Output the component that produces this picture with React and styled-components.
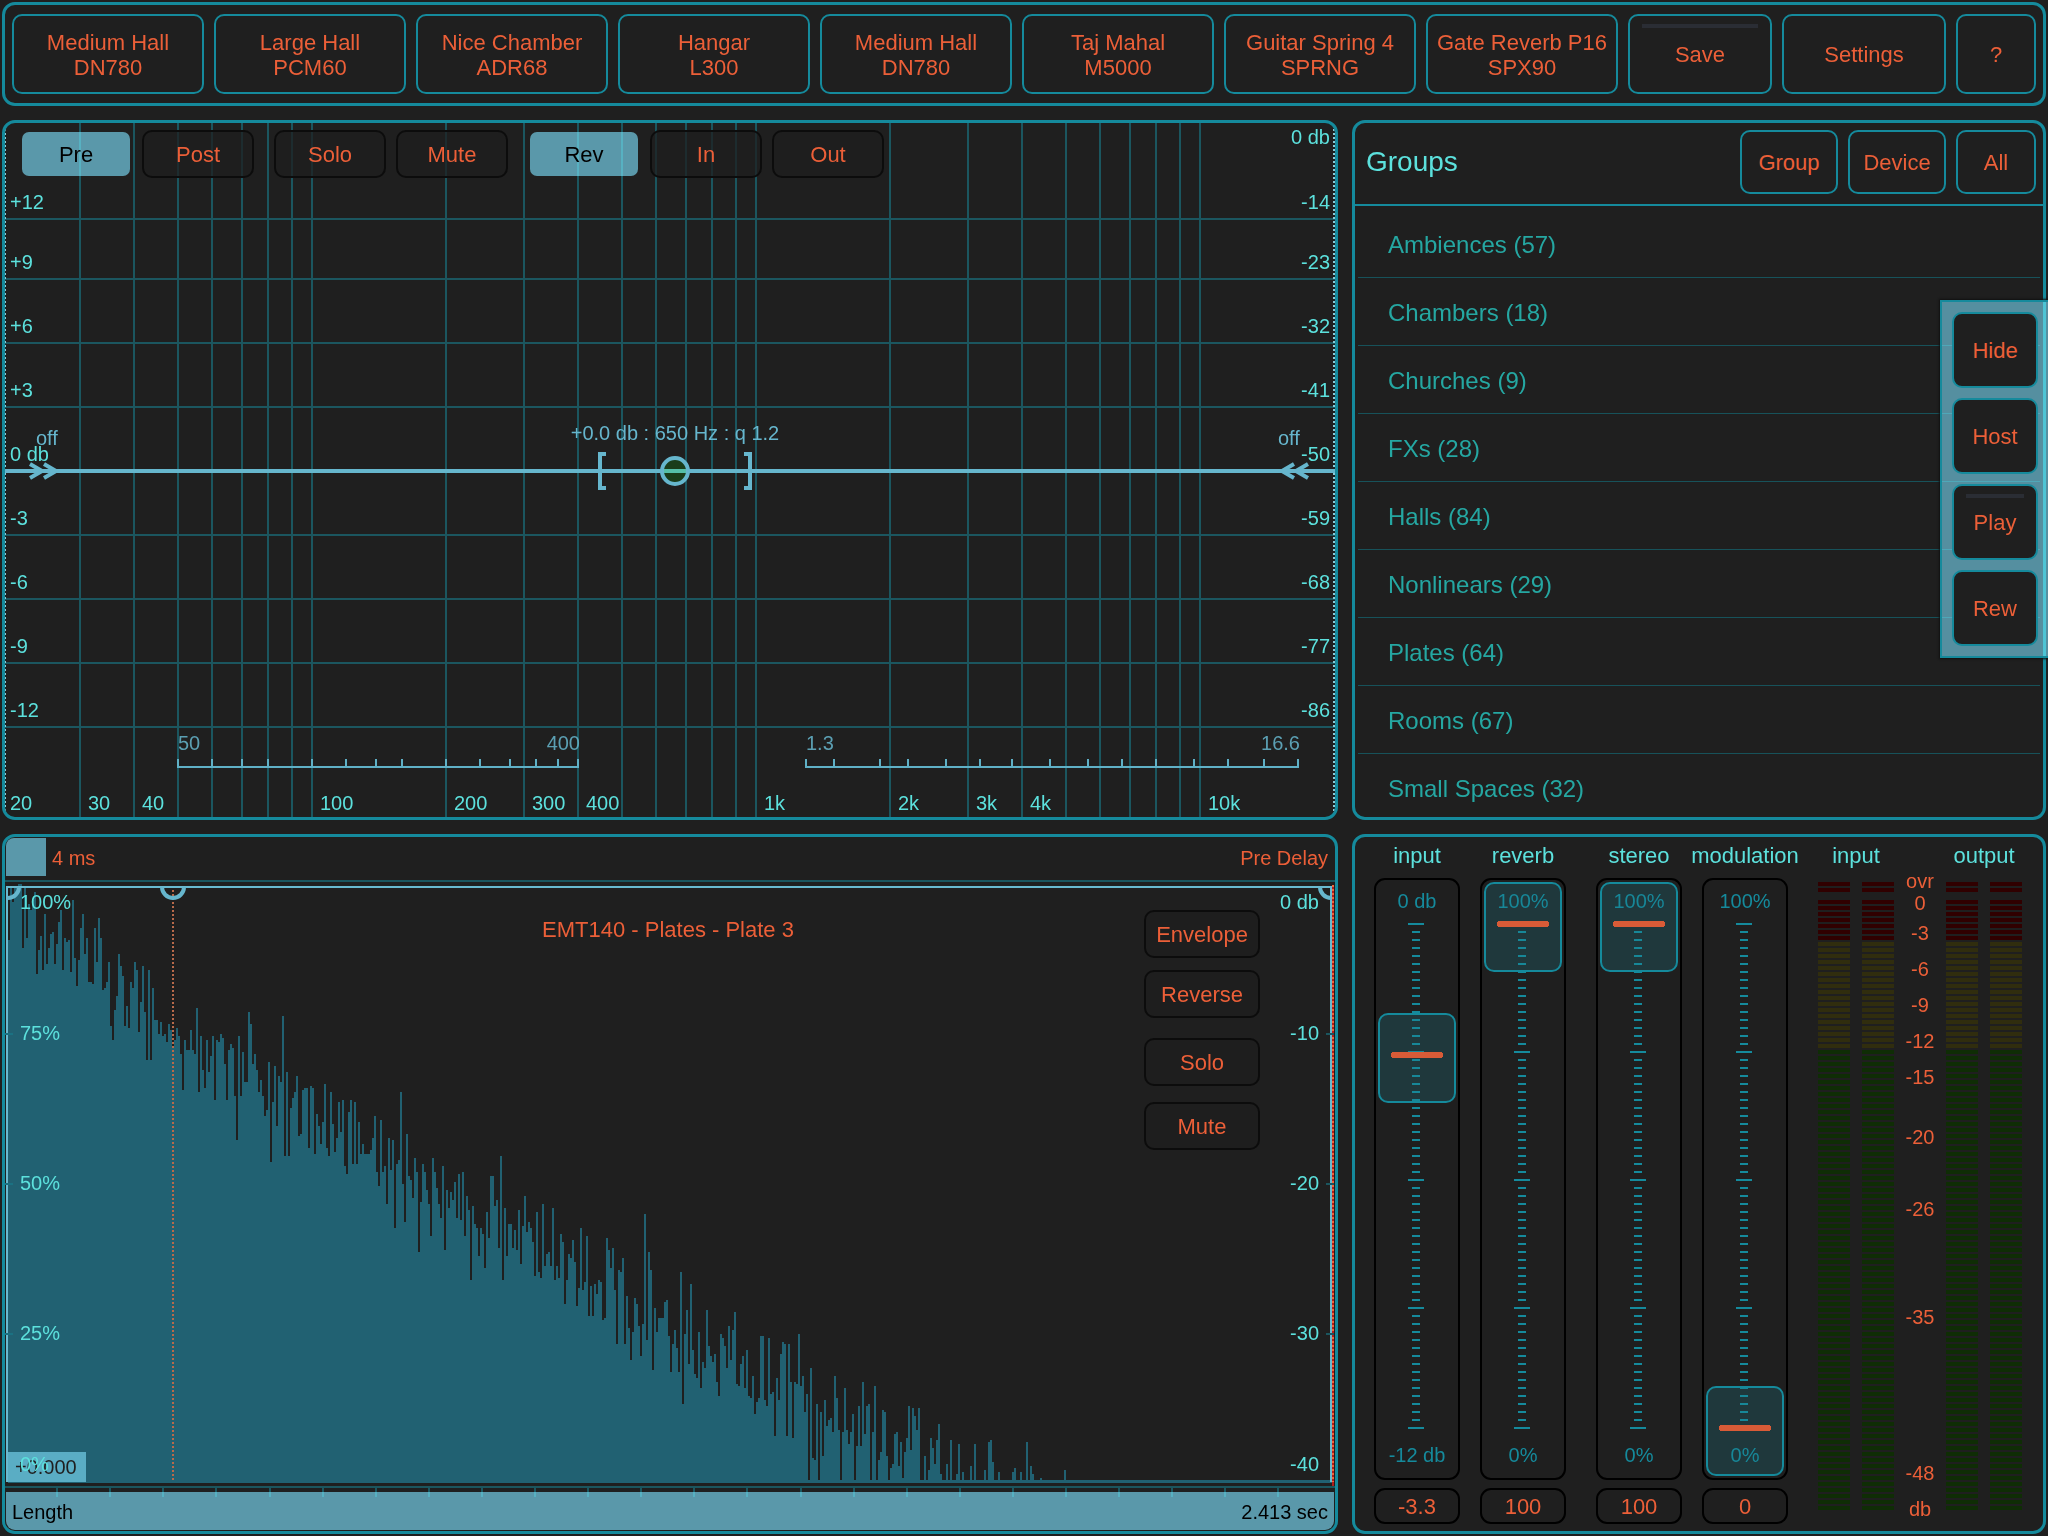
import React, { useState } from 'react';
import styled, { createGlobalStyle, css } from 'styled-components';

const BG = '#1f1f1f';
const TEAL = '#158a9c';
const GRID = '#1b565f';
const CYAN = '#5ce1dd';
const ORANGE = '#ec5f38';
const BLUE = '#66b6cd';
// screened over BG, so that the grid lines underneath stay visible
const FILL = '#438a9e';

const GlobalStyle = createGlobalStyle`
  * { box-sizing: border-box; }
  body {
    margin: 0;
    background: ${BG};
    color: ${CYAN};
    font-family: "Liberation Sans", Arial, sans-serif;
    font-size: 20px;
  }
  button, input { font: inherit; }
`;

/* ---------- layout ---------- */

const Page = styled.div`
  position: relative;
  display: grid;
  grid-template-rows: 104px minmax(0, 1fr) minmax(0, 1fr);
  gap: 14px;
  height: 100vh;
  min-height: 1200px;
  padding: 2px;
  overflow: hidden;
`;

const Columns = styled.div`
  display: grid;
  grid-template-columns: minmax(0, 668fr) minmax(0, 347fr);
  gap: 14px;
`;

const Panel = styled.section`
  border: 3px solid ${TEAL};
  border-radius: 13px;
  min-height: 0;
  overflow: hidden;
`;

const PresetBar = styled(Panel).attrs({ as: 'header' })`
  display: grid;
  grid-template-columns: repeat(8, 192fr) 144fr 164fr 80fr;
  gap: 10px;
  padding: 9px 7px;
`;

/* ---------- buttons ---------- */

const Button = styled.button`
  position: relative;
  padding: 0;
  border: 2px solid ${TEAL};
  border-radius: 10px;
  background: ${BG};
  color: ${ORANGE};
  font-size: 22px;
  line-height: 25px;
  white-space: pre-line;
  cursor: pointer;

  ${(p) => p.$progress && css`
    &::before {
      content: '';
      position: absolute;
      top: 8px;
      left: 12px;
      right: 12px;
      height: 4px;
      background: #2a2d34;
    }
  `}
`;

const PresetButton = styled(Button)`
  padding-top: 2px;
`;

const DarkButton = styled(Button)`
  width: ${(p) => (p.$wide ? 116 : 112)}px;
  height: 48px;
  border-color: #0c0c0c;
  background: rgba(31, 31, 31, 0.75);

  ${(p) => p.$active && css`
    border-color: transparent;
    background: none;
    color: #000;
    &::before {
      content: '';
      position: absolute;
      inset: 0;
      border-radius: 7px;
      background: ${FILL};
      mix-blend-mode: screen;
    }
  `}
`;

const Caption = styled.span`
  position: relative;
`;

/* ---------- equalizer ---------- */

const Stack = styled.div`
  display: grid;
  grid-template: minmax(0, 1fr) / minmax(0, 1fr);
  flex: 1;
  min-height: 0;
  height: 100%;
  & > * { grid-area: 1 / 1; }
`;

const Chart = styled.svg`
  display: block;
  width: 100%;
  height: 100%;
  text { font-size: 20px; fill: ${CYAN}; }
  line { shape-rendering: crispEdges; }
`;

const EqButtons = styled.div`
  display: flex;
  align-self: start;
  gap: 20px;
  padding: 7px 15px;
`;

const ButtonPair = styled.div`
  display: flex;
  gap: 10px;
`;

/* ---------- groups ---------- */

const GroupsHeader = styled.div`
  display: flex;
  align-items: center;
  gap: 10px;
  padding: 7px 7px 10px 11px;
  border-bottom: 2px solid ${TEAL};
`;

const GroupsTitle = styled.h1`
  flex: 1;
  margin: 0;
  font-size: 28px;
  font-weight: normal;
`;

const HeaderButton = styled(Button)`
  width: ${(p) => (p.$narrow ? 80 : 98)}px;
  height: 64px;
`;

const GroupList = styled.ul`
  list-style: none;
  margin: 0;
  padding: 4px 3px 0;
`;

const GroupRow = styled.li`
  display: flex;
  align-items: center;
  height: 68px;
  padding: 2px 0 0 30px;
  border-bottom: 1px solid #17525a;
  color: #25a7a2;
  font-size: 24px;
`;

const SideDock = styled.nav`
  position: absolute;
  top: 300px;
  right: 0;
  display: flex;
  flex-direction: column;
  gap: 10px;
  padding: 10px;
  border: 2px solid ${TEAL};
  border-right: none;
  box-shadow: 0 0 2px 1px #111;

  &::before {
    content: '';
    position: absolute;
    inset: 0;
    background: #3e7f93;
    mix-blend-mode: screen;
  }
`;

const DockButton = styled(Button)`
  width: 86px;
  height: 76px;
`;

/* ---------- impulse response ---------- */

const ImpulsePanel = styled(Panel)`
  display: flex;
  flex-direction: column;
`;

const BarRow = styled.label`
  display: grid;
  grid-template: minmax(0, 1fr) / minmax(0, 1fr);
  height: 45px;
  & > * { grid-area: 1 / 1; }
`;

const DelayRow = styled(BarRow)`
  padding: 1px;
  border-bottom: 2px solid ${GRID};
  color: ${ORANGE};
`;

const LengthRow = styled(BarRow)`
  border-top: 2px solid ${GRID};
  color: #000;
`;

const BarText = styled.span`
  position: relative;
  display: flex;
  justify-content: space-between;
  align-items: center;
  padding: ${(p) => p.$pad};
  pointer-events: none;
`;

const DelayRange = styled.input`
  appearance: none;
  width: 100%;
  height: 38px;
  margin: 0;
  background: none;
  &::-webkit-slider-thumb {
    appearance: none;
    width: 40px;
    height: 38px;
    border-radius: 8px 0 0 0;
    background: #5a98aa;
  }
`;

const LengthRange = styled.input`
  appearance: none;
  height: 38px;
  margin: 4px 1px 1px;
  border-radius: 0 0 9px 9px;
  background: ${FILL};
  mix-blend-mode: screen;
  &::-webkit-slider-thumb {
    appearance: none;
    width: 1px;
    height: 38px;
  }
`;

const ImpulseButtons = styled.div`
  display: flex;
  flex-direction: column;
  gap: 12px;
  place-self: start end;
  padding: 28px 75px 0 0;
`;

const ImpulseMix = styled.div`
  display: flex;
  flex-direction: column;
  gap: 16px;
  padding-top: 8px;
`;

/* ---------- mixer ---------- */

const MixerPanel = styled(Panel)`
  display: flex;
  justify-content: space-between;
  padding: 0 21px 0 19px;
`;

const FaderPair = styled.div`
  display: flex;
  gap: 20px;
`;

const FaderColumn = styled.div`
  display: flex;
  flex-direction: column;
  width: 86px;
  padding-bottom: 7px;
`;

const ColumnLabel = styled.label`
  display: flex;
  justify-content: center;
  height: 41px;
  font-size: 22px;
  line-height: 38px;
  white-space: nowrap;
`;

const FaderTrack = styled(Stack)`
  border: 2px solid #000;
  border-radius: 11px;
`;

const FaderRange = styled.input`
  appearance: none;
  writing-mode: vertical-lr;
  direction: rtl;
  width: 78px;
  height: calc(100% - 4px);
  margin: 2px;
  background: none;
  &::-webkit-slider-thumb {
    appearance: none;
    width: 78px;
    height: 90px;
    border: 2px solid ${TEAL};
    border-radius: 10px;
    background:
      radial-gradient(circle at 3px 3px, #d85b37 3px, transparent 3px) 11px 37px / 6px 6px no-repeat,
      radial-gradient(circle at 3px 3px, #d85b37 3px, transparent 3px) 57px 37px / 6px 6px no-repeat,
      linear-gradient(#d85b37, #d85b37) 14px 37px / 46px 6px no-repeat,
      rgba(32, 128, 144, 0.26);
  }
`;

const ValueBox = styled.input`
  width: 100%;
  height: 36px;
  margin-top: 8px;
  padding: 2px 0 0;
  border: 2px solid #000;
  border-radius: 11px;
  background: none;
  color: ${ORANGE};
  font-size: 22px;
  text-align: center;
`;

const Meters = styled.div`
  display: flex;
`;

const MeterColumn = styled.div`
  display: flex;
  flex-direction: column;
  width: 76px;
  padding-bottom: 21px;
`;

const MeterBars = styled.div`
  display: flex;
  flex: 1;
  gap: 12px;
  min-height: 0;
  padding-top: 4px;
`;

const MeterBar = styled.svg`
  width: 32px;
  height: 100%;
`;

const MeterScale = styled.div`
  width: 52px;
  text { fill: ${ORANGE}; text-anchor: middle; }
`;

/* ---------- data ---------- */

const presets = [
  'Medium Hall\nDN780',
  'Large Hall\nPCM60',
  'Nice Chamber\nADR68',
  'Hangar\nL300',
  'Medium Hall\nDN780',
  'Taj Mahal\nM5000',
  'Guitar Spring 4\nSPRNG',
  'Gate Reverb P16\nSPX90',
];

const eqButtons = [['Pre', 'Post'], ['Solo', 'Mute'], ['Rev', 'In', 'Out']];

const groups = [
  ['Ambiences', 57],
  ['Chambers', 18],
  ['Churches', 9],
  ['FXs', 28],
  ['Halls', 84],
  ['Nonlinears', 29],
  ['Plates', 64],
  ['Rooms', 67],
  ['Small Spaces', 32],
];

const dbRows = [
  [96, '+12', '-14'],
  [156, '+9', '-23'],
  [220, '+6', '-32'],
  [284, '+3', '-41'],
  [348, '0 db', '-50'],
  [412, '-3', '-59'],
  [476, '-6', '-68'],
  [540, '-9', '-77'],
  [604, '-12', '-86'],
];

const freqs = [
  30, 40, 50, 60, 70, 80, 90, 100, 200, 300, 400, 500, 600, 700, 800, 900, 1000,
  2000, 3000, 4000, 5000, 6000, 7000, 8000, 9000, 10000,
];

const freqLabels = [
  [30, '30'], [40, '40'], [100, '100'], [200, '200'], [300, '300'], [400, '400'],
  [1000, '1k'], [2000, '2k'], [3000, '3k'], [4000, '4k'], [10000, '10k'],
];

const lowTicks = [173, 207, 237, 263, 307, 341, 371, 397, 441, 475, 505, 531, 553, 573];
const highTicks = [801, 829, 875, 903, 941, 975, 1007, 1045, 1083, 1117, 1151, 1189, 1223, 1259, 1293];

// top of every bar of the impulse, in 2px steps; 330 is silence
const impulse = [
  60, 34, 41, 34, 34, 32, 32, 64, 34, 59, 42, 45, 40, 36, 77, 65, 58, 75, 47, 72, 64, 57, 56, 72, 62,
  51, 45, 75, 59, 61, 60, 76, 40, 69, 83, 70, 54, 47, 67, 59, 81, 81, 82, 54, 71, 49, 59, 85, 84, 81,
  71, 103, 110, 95, 88, 67, 73, 78, 103, 93, 104, 81, 84, 71, 75, 106, 91, 73, 96, 120, 75, 120, 84,
  100, 100, 107, 101, 108, 107, 111, 102, 105, 113, 110, 104, 108, 117, 135, 110, 115, 115, 105, 115,
  117, 94, 136, 108, 125, 134, 110, 126, 118, 108, 140, 110, 111, 107, 109, 122, 140, 115, 112, 114,
  138, 160, 108, 138, 116, 131, 131, 96, 102, 122, 117, 125, 136, 130, 138, 148, 145, 121, 171, 141,
  123, 153, 128, 131, 98, 168, 126, 168, 144, 139, 136, 128, 158, 157, 135, 134, 134, 164, 133, 134,
  167, 147, 153, 162, 151, 132, 164, 168, 136, 152, 166, 159, 141, 156, 140, 173, 177, 146, 140, 172,
  141, 172, 151, 167, 162, 167, 167, 167, 165, 159, 148, 176, 183, 150, 176, 173, 192, 159, 175, 160,
  204, 172, 170, 136, 182, 201, 157, 178, 180, 189, 169, 176, 216, 191, 172, 176, 185, 192, 208, 169,
  176, 184, 192, 199, 173, 215, 185, 194, 186, 190, 181, 199, 177, 200, 176, 208, 188, 195, 230, 193,
  202, 204, 218, 204, 207, 224, 196, 209, 178, 178, 193, 190, 214, 168, 230, 194, 218, 202, 202, 214,
  205, 215, 195, 222, 203, 188, 206, 201, 204, 211, 228, 196, 226, 229, 192, 223, 217, 216, 223, 194,
  230, 223, 229, 207, 211, 242, 230, 217, 219, 210, 221, 243, 234, 204, 235, 231, 208, 248, 233, 248,
  232, 237, 230, 231, 250, 249, 209, 215, 224, 214, 235, 262, 225, 226, 219, 262, 238, 254, 270, 256,
  239, 242, 253, 268, 252, 197, 260, 216, 225, 275, 244, 256, 249, 249, 249, 241, 240, 258, 276, 262,
  255, 264, 276, 226,
  292, 257, 245, 272, 232, 265, 277, 279, 256, 284, 271, 274, 245, 263, 268, 271, 267, 281, 288, 257,
  259, 263, 274, 253, 270, 255, 246, 282, 283, 272, 268, 284, 265, 288, 289, 278, 297, 291, 289, 258,
  258, 290, 293, 259, 287, 286, 308, 279, 290, 267, 261, 262, 308, 262, 281, 309, 281, 282, 257, 283,
  278, 296, 287, 330, 274, 319, 320, 292, 330, 296, 318, 290, 303, 300, 299, 306, 278, 289, 305, 330,
  306, 284, 305, 312, 306, 297, 330, 313, 293, 313, 281, 307, 293, 292, 330, 306, 283, 330, 320, 316,
  295, 296, 318, 330, 324, 322, 307, 306, 323, 311, 329, 316, 309, 293, 315, 294, 298, 305, 294, 330,
  330, 318, 330, 325, 309, 314, 322, 310, 302, 327, 330, 330, 322, 330, 310, 330, 330, 327, 312, 330,
  326, 330, 330, 330, 323, 330, 312, 330, 330, 330, 330, 325, 330, 311, 310, 321, 330, 330, 326, 330,
  330, 330, 330, 330, 330, 326, 324, 330, 330, 326, 330, 330, 311, 330, 323, 327, 330, 330, 330, 329,
  330, 330, 330, 330, 330, 330, 330, 330, 330, 330, 330, 325,
];

const faders = [
  [
    { id: 'input', top: '0 db', bottom: '-12 db', position: 74, value: '-3.3' },
    { id: 'reverb', top: '100%', bottom: '0%', position: 100, value: '100' },
  ],
  [
    { id: 'stereo', top: '100%', bottom: '0%', position: 100, value: '100' },
    { id: 'modulation', top: '100%', bottom: '0%', position: 0, value: '0' },
  ],
];

const meterMarks = [
  [51, 'ovr'], [73, '0'], [103, '-3'], [139, '-6'], [175, '-9'], [211, '-12'],
  [247, '-15'], [307, '-20'], [379, '-26'], [487, '-35'], [643, '-48'], [679, 'db'],
];

/* ---------- helpers ---------- */

const pct = (size) => (v) => `${(v / size) * 100}%`;

// log scale, snapped to 2px steps
const freqX = (f) => Math.round((311.4 + 444 * Math.log10(f / 100)) / 2) * 2 - 5;

const impulsePath = () => {
  let d = 'M3 601';
  impulse.forEach((top, i) => {
    d += `V${top * 2 - 62}H${5 + i * 2}`;
  });
  return `${d}V598H1327V601Z`;
};

const segmentColor = (i) => {
  if (i < 10) return '#300000';
  if (i < 28) return '#302d0e';
  return '#0f2d05';
};

/* ---------- components ---------- */

const Ruler = ({ ticks, x, y }) => (
  <g stroke="#5fb0c6" strokeWidth="2">
    <line x1={x(ticks[0] - 1)} x2={x(ticks[ticks.length - 1] + 1)} y1={y(644)} y2={y(644)} />
    {ticks.map((t) => (
      <line key={t} x1={x(t)} x2={x(t)} y1={y(636)} y2={y(644)} />
    ))}
  </g>
);

const EqChart = () => {
  const x = pct(1330);
  const y = pct(694);
  return (
    <Chart role="img" aria-label="Equalizer">
      <g stroke={GRID} strokeWidth="2">
        {freqs.map((f) => (
          <line key={f} x1={x(freqX(f))} x2={x(freqX(f))} y1="0" y2="100%" />
        ))}
        {dbRows.filter((r) => r[1] !== '0 db').map(([row]) => (
          <line key={row} x1="0" x2="100%" y1={y(row)} y2={y(row)} />
        ))}
      </g>
      <g stroke="#8ccbd8" strokeDasharray="2 2">
        <line x1="0" x2="0" y1={y(6)} y2={y(688)} />
        <line x1={x(1329)} x2={x(1329)} y1={y(6)} y2={y(688)} strokeWidth="2" />
      </g>

      <text x={x(1325)} y={y(21)} textAnchor="end">0 db</text>
      {dbRows.map(([row, left, right]) => (
        <g key={row}>
          <text x={x(5)} y={y(row - 10)}>{left}</text>
          <text x={x(1325)} y={y(row - 10)} textAnchor="end">{right}</text>
        </g>
      ))}
      <text x={x(5)} y={y(687)}>20</text>
      {freqLabels.map(([f, label]) => (
        <text key={f} x={x(freqX(f) + 8)} y={y(687)}>{label}</text>
      ))}

      <Ruler ticks={lowTicks} x={x} y={y} />
      <Ruler ticks={highTicks} x={x} y={y} />
      <g style={{ opacity: 0.85 }}>
        <text x={x(173)} y={y(627)} style={{ fill: BLUE }}>50</text>
        <text x={x(575)} y={y(627)} textAnchor="end" style={{ fill: BLUE }}>400</text>
        <text x={x(801)} y={y(627)} style={{ fill: BLUE }}>1.3</text>
        <text x={x(1295)} y={y(627)} textAnchor="end" style={{ fill: BLUE }}>16.6</text>
      </g>

      <line x1="0" x2="100%" y1={y(348)} y2={y(348)} stroke={BLUE} strokeWidth="4" />
      <text x={x(31)} y={y(322)} style={{ fill: BLUE }}>off</text>
      <text x={x(1273)} y={y(322)} style={{ fill: BLUE }}>off</text>
      <text x={x(670)} y={y(317)} textAnchor="middle" style={{ fill: BLUE }}>
        +0.0 db : 650 Hz : q 1.2
      </text>
      <svg x={x(24)} y={y(348)} overflow="visible">
        <path d="M1 -7L13 0L1 7M15 -7L27 0L15 7" fill="none" stroke={BLUE} strokeWidth="4" />
      </svg>
      <svg x={x(1304)} y={y(348)} overflow="visible">
        <path d="M-1 -7L-13 0L-1 7M-15 -7L-27 0L-15 7" fill="none" stroke={BLUE} strokeWidth="4" />
      </svg>
      <svg x={x(670)} y={y(348)} overflow="visible">
        <circle r="13" fill="#1a3d1a" stroke={BLUE} strokeWidth="4" />
        <path d="M-11 0H11" stroke="#55bfa8" strokeWidth="4" />
        <path d="M-69 -17H-75V17H-69M69 -17H75V17H69" fill="none" stroke={BLUE} strokeWidth="4" />
      </svg>
    </Chart>
  );
};

const ImpulseChart = () => {
  const x = pct(1330);
  const y = pct(604);
  const marks = [[27, '100%', '0 db'], [158, '75%', '-10'], [308, '50%', '-20'], [458, '25%', '-30'], [589, '0%', '-40']];
  return (
    <Chart role="img" aria-label="Impulse response">
      <svg width="100%" height="100%" viewBox="0 0 1330 604" preserveAspectRatio="none">
        <path d={impulsePath()} fill="#216172" shapeRendering="crispEdges" />
      </svg>
      <line x1={x(1)} x2={x(1327)} y1={y(5)} y2={y(5)} stroke="#69bad0" strokeWidth="2" />
      <line x1={x(2)} x2={x(2)} y1={y(4)} y2={y(600)} stroke="#69bad0" strokeWidth="2" />
      <line x1={x(1326)} x2={x(1326)} y1={y(4)} y2={y(600)} stroke="#69bad0" strokeWidth="2" />
      <line x1={x(1328)} x2={x(1328)} y1={y(3)} y2="100%" stroke="#b01c1c" strokeWidth="2" />
      <line x1={x(1328)} x2={x(1328)} y1={y(3)} y2={y(600)} stroke="#f0663c" strokeWidth="2" strokeDasharray="2 2" />
      <line x1={x(168)} x2={x(168)} y1={y(8)} y2={y(598)} stroke="#b8694a" strokeWidth="2" strokeDasharray="2 2" />
      <g stroke={GRID} strokeWidth="2">
        {[152, 302, 452].map((t) => (
          <React.Fragment key={t}>
            <line x1="0" x2={x(8)} y1={y(t)} y2={y(t)} stroke="#1b7182" />
            <line x1={x(1321)} x2={x(1329)} y1={y(t)} y2={y(t)} />
          </React.Fragment>
        ))}
      </g>
      <svg x={x(168)} y={y(5)} overflow="visible">
        <path d="M-11 0A11 11 0 0 0 11 0" fill="none" stroke={BLUE} strokeWidth="4" />
      </svg>
      <svg x={x(3)} y={y(5)} overflow="visible">
        <path d="M0 11A11 11 0 0 0 11 0" fill="none" stroke={BLUE} strokeWidth="4" />
      </svg>
      <svg x={x(1326)} y={y(5)} overflow="visible">
        <path d="M-11 0A11 11 0 0 0 0 11" fill="none" stroke={BLUE} strokeWidth="4" />
      </svg>
      <svg x={x(3)} y={y(570)} overflow="visible">
        <rect width="78" height="30" fill="#5aadc4" />
        <text x="7" y="22" style={{ fill: BG }}>+0.000</text>
      </svg>
      {marks.map(([row, left, right]) => (
        <g key={row}>
          <text x={x(15)} y={y(row)}>{left}</text>
          <text x={x(1314)} y={y(row)} textAnchor="end">{right}</text>
        </g>
      ))}
      <text x={x(663)} y={y(55)} textAnchor="middle" style={{ fill: ORANGE, fontSize: 22 }}>
        EMT140 - Plates - Plate 3
      </text>
    </Chart>
  );
};

const LengthTicks = () => (
  <Chart aria-hidden="true">
    {Array.from({ length: 24 }, (_, i) => {
      const tick = pct(1330)(Math.round(53.1 * (i + 1)) - 1);
      return <line key={i} x1={tick} x2={tick} y1="0" y2="9" stroke={GRID} strokeWidth="2" />;
    })}
  </Chart>
);

const FaderScale = ({ top, bottom }) => {
  const y = pct(598);
  return (
    <Chart aria-hidden="true">
      {Array.from({ length: 64 }, (_, i) => {
        const half = i % 16 === 0 || i === 63 ? 8 : 4;
        return (
          <svg key={i} x="50%" y={y(44 + i * 8)} overflow="visible">
            <line x1={-half - 1} x2={half - 1} y1="0" y2="0" stroke={TEAL} strokeWidth="2" />
          </svg>
        );
      })}
      <text x="50%" y={y(28)} textAnchor="middle" style={{ fill: TEAL }}>{top}</text>
      <text x="50%" y={y(582)} textAnchor="middle" style={{ fill: TEAL }}>{bottom}</text>
    </Chart>
  );
};

const Fader = ({ id, top, bottom, position, value }) => (
  <FaderColumn>
    <ColumnLabel htmlFor={id}>{id}</ColumnLabel>
    <FaderTrack>
      <FaderScale top={top} bottom={bottom} />
      <FaderRange id={id} type="range" min="0" max="100" defaultValue={position} />
    </FaderTrack>
    <ValueBox type="text" aria-label={`${id} value`} defaultValue={value} />
  </FaderColumn>
);

const Meter = () => (
  <MeterBar viewBox="0 0 32 628" preserveAspectRatio="none" aria-hidden="true">
    {Array.from({ length: 105 }, (_, i) => (
      i !== 2 && <rect key={i} y={i * 6} width="32" height="4" fill={segmentColor(i)} />
    ))}
  </MeterBar>
);

const MeterPair = ({ name }) => (
  <MeterColumn>
    <ColumnLabel as="span">{name}</ColumnLabel>
    <MeterBars>
      <Meter />
      <Meter />
    </MeterBars>
  </MeterColumn>
);

const App = () => {
  const [active, setActive] = useState({ Pre: true, Rev: true });
  const toggle = (name) => setActive({ ...active, [name]: !active[name] });

  return (
    <>
      <GlobalStyle />
      <Page>
        <PresetBar>
          {presets.map((name, i) => (
            <PresetButton key={i}>{name}</PresetButton>
          ))}
          <Button $progress>Save</Button>
          <Button>Settings</Button>
          <Button>?</Button>
        </PresetBar>

        <Columns>
          <Panel>
            <Stack>
              <EqChart />
              <EqButtons>
                {eqButtons.map((pair) => (
                  <ButtonPair key={pair[0]}>
                    {pair.map((name) => (
                      <DarkButton
                        key={name}
                        $active={active[name]}
                        aria-pressed={!!active[name]}
                        onClick={() => toggle(name)}
                      >
                        <Caption>{name}</Caption>
                      </DarkButton>
                    ))}
                  </ButtonPair>
                ))}
              </EqButtons>
            </Stack>
          </Panel>

          <Panel>
            <GroupsHeader>
              <GroupsTitle>Groups</GroupsTitle>
              <HeaderButton>Group</HeaderButton>
              <HeaderButton>Device</HeaderButton>
              <HeaderButton $narrow>All</HeaderButton>
            </GroupsHeader>
            <GroupList>
              {groups.map(([name, count]) => (
                <GroupRow key={name}>{`${name} (${count})`}</GroupRow>
              ))}
            </GroupList>
          </Panel>
        </Columns>

        <Columns>
          <ImpulsePanel>
            <DelayRow>
              <DelayRange type="range" aria-label="Pre Delay" defaultValue="0" />
              <BarText $pad="0 6px 0 46px">
                <span>4 ms</span>
                <span>Pre Delay</span>
              </BarText>
            </DelayRow>
            <Stack>
              <ImpulseChart />
              <ImpulseButtons>
                <DarkButton $wide>Envelope</DarkButton>
                <DarkButton $wide>Reverse</DarkButton>
                <ImpulseMix>
                  <DarkButton $wide>Solo</DarkButton>
                  <DarkButton $wide>Mute</DarkButton>
                </ImpulseMix>
              </ImpulseButtons>
            </Stack>
            <LengthRow>
              <LengthTicks />
              <LengthRange type="range" aria-label="Length" defaultValue="100" />
              <BarText $pad="5px 7px 0">
                <span>Length</span>
                <span>2.413 sec</span>
              </BarText>
            </LengthRow>
          </ImpulsePanel>

          <MixerPanel>
            {faders.map((pair) => (
              <FaderPair key={pair[0].id}>
                {pair.map((f) => (
                  <Fader key={f.id} {...f} />
                ))}
              </FaderPair>
            ))}
            <Meters>
              <MeterPair name="input" />
              <MeterScale>
                <Chart aria-hidden="true">
                  {meterMarks.map(([row, mark]) => (
                    <text key={mark} x="50%" y={pct(694)(row)}>{mark}</text>
                  ))}
                </Chart>
              </MeterScale>
              <MeterPair name="output" />
            </Meters>
          </MixerPanel>
        </Columns>

        <SideDock>
          <DockButton>Hide</DockButton>
          <DockButton>Host</DockButton>
          <DockButton $progress>Play</DockButton>
          <DockButton>Rew</DockButton>
        </SideDock>
      </Page>
    </>
  );
};

export default App;
